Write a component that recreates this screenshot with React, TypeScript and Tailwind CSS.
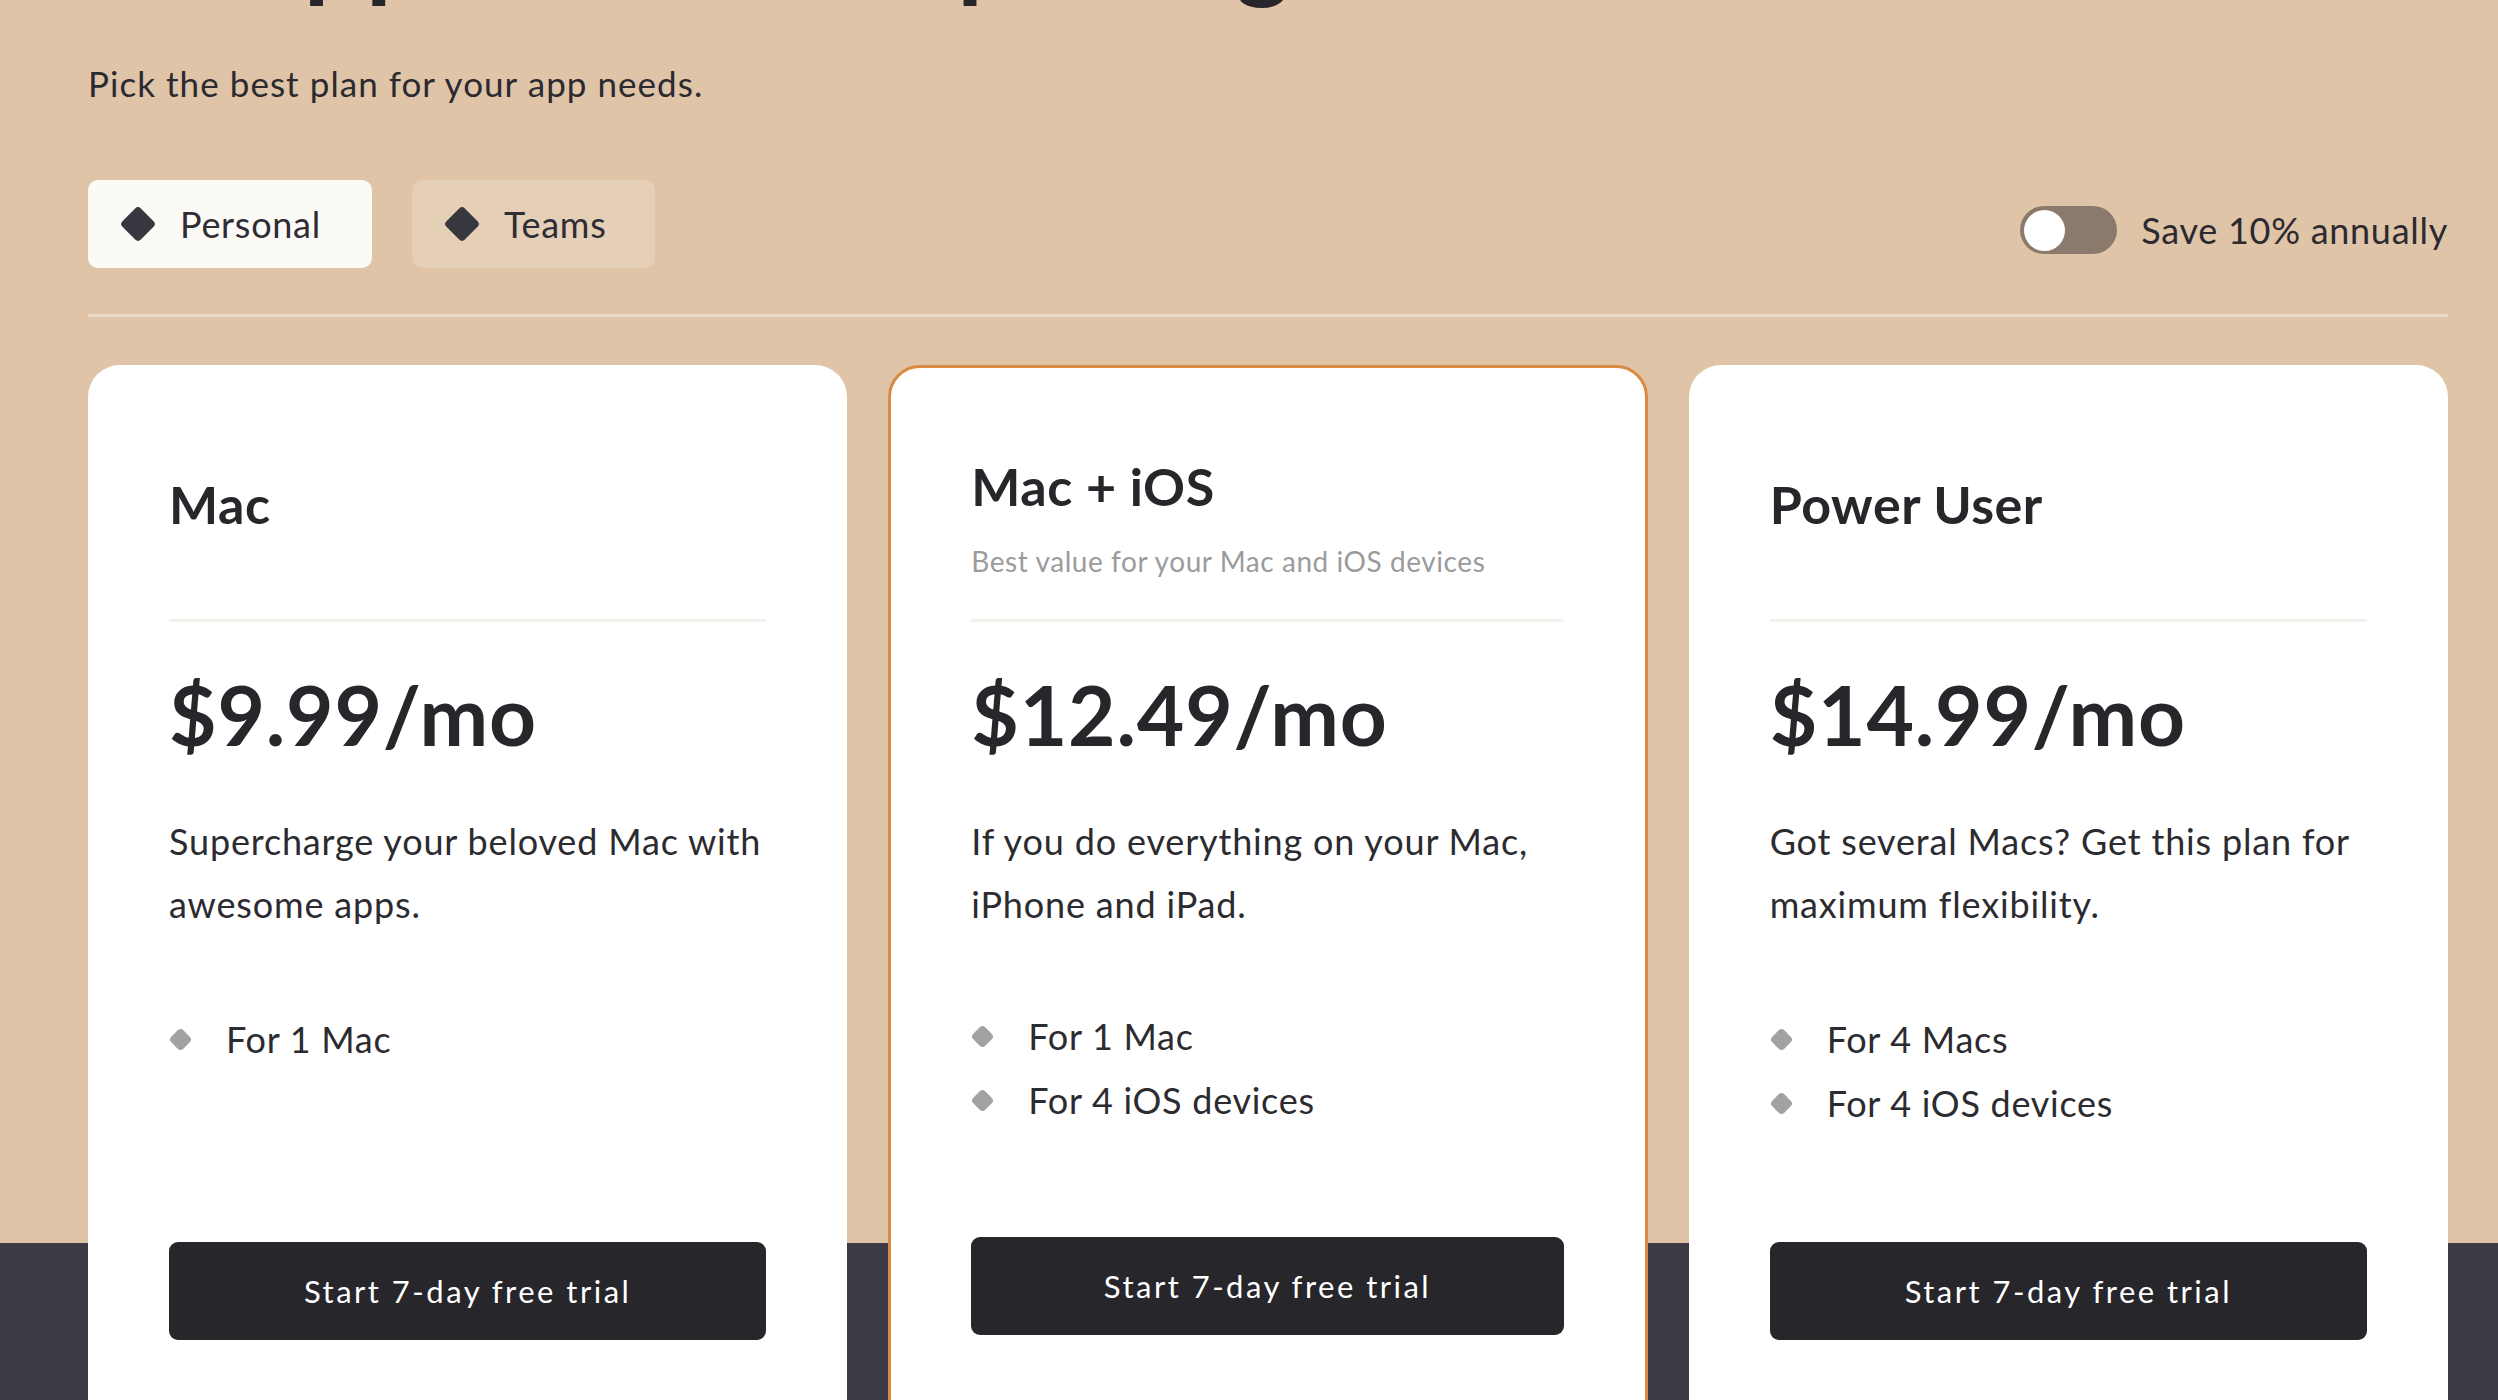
const plans = [
  {
    name: "Mac",
    price: "$9.99/mo",
    desc: ["Supercharge your beloved Mac with", "awesome apps."],
    features: ["For 1 Mac"],
  },
  {
    name: "Mac + iOS",
    note: "Best value for your Mac and iOS devices",
    price: "$12.49/mo",
    desc: ["If you do everything on your Mac,", "iPhone and iPad."],
    features: ["For 1 Mac", "For 4 iOS devices"],
    featured: true,
  },
  {
    name: "Power User",
    price: "$14.99/mo",
    desc: ["Got several Macs? Get this plan for", "maximum flexibility."],
    features: ["For 4 Macs", "For 4 iOS devices"],
  },
];

type Plan = (typeof plans)[number];

const Diamond = ({ className }: { className: string }) => (
  <span className={`block shrink-0 rotate-45 rounded-[4px] ${className}`} />
);

const PlanCard = ({ plan }: { plan: Plan }) => {
  return (
    <div
      className={`flex flex-col rounded-[32px] bg-white pb-24 ${
        plan.featured ? "border-[3px] border-[#d98b41] pl-[80px] pr-[81px]" : "px-[81px] pt-[3px]"
      }`}
    >
      <div
        className={`flex h-[254px] flex-col border-b-[3px] border-[#f4f0eb] ${
          plan.featured ? "pt-[88px]" : "pt-[106px]"
        }`}
      >
        <h2 className="text-[52px] font-bold leading-[60px] tracking-[0.01em] text-[#27272b]">
          {plan.name}
        </h2>
        {plan.note && (
          <p className="mt-[25px] text-[28px] leading-[40px] tracking-[0.02em] text-[#9b9b9d]">
            {plan.note}
          </p>
        )}
      </div>
      <div className="mt-[44px] text-[82px] font-bold leading-[96px] tracking-[0.01em] text-[#27272b]">
        {plan.price}
      </div>
      <p className="mt-[48px] text-[36px] leading-[63px] tracking-[0.023em] text-[#2b2b30]">
        {plan.desc.map((line) => (
          <span key={line} className="block">
            {line}
          </span>
        ))}
      </p>
      <ul
        className={`flex flex-col ${
          plan.featured ? "mt-[68px] h-[233px]" : "mt-[71px] h-[235px]"
        }`}
      >
        {plan.features.map((f) => (
          <li key={f} className="flex h-[64px] items-center gap-[37px]">
            <Diamond className="ml-[3px] h-[17px] w-[17px] bg-[#a2a2a4]" />
            <span className="text-[36px] tracking-[0.02em] text-[#2b2b30]">{f}</span>
          </li>
        ))}
      </ul>
      <button className="h-[98px] rounded-[9px] bg-[#26262b] text-[31px] tracking-[0.08em] text-white">
        Start 7-day free trial
      </button>
    </div>
  );
};

export default function App() {
  return (
    <div className="min-h-[1400px] overflow-hidden bg-[linear-gradient(to_bottom,#dfc4a8_1243px,#3c3b46_1243px)] font-[Lato,sans-serif] text-[#2b2a30]">
      <div className="ml-[88px] w-[2360px]">
        <h1 className="-mt-[103px] whitespace-nowrap text-[104px] font-bold leading-[104px] tracking-[0.03em] text-[#26262b]">
          Setapp all-in-one pricing
        </h1>
        <p className="mt-[58px] text-[35px] leading-[48px] tracking-[0.03em]">
          Pick the best plan for your app needs.
        </p>

        <div className="mt-[73px] flex items-center justify-between">
          <div className="flex gap-[40px]">
            <button className="flex h-[88px] items-center gap-[29px] rounded-[10px] bg-[#fcfaf7] pl-[37px] pr-[51px]">
              <Diamond className="h-[26px] w-[26px] bg-[#38373f]" />
              <span className="text-[36px] tracking-[0.02em] text-[#2e2d33]">Personal</span>
            </button>
            <button className="flex h-[88px] items-center gap-[29px] rounded-[10px] bg-[#e5cfb7] pl-[37px] pr-[49px]">
              <Diamond className="h-[26px] w-[26px] bg-[#38373f]" />
              <span className="text-[36px] tracking-[0.02em] text-[#2e2d33]">Teams</span>
            </button>
          </div>
          <div className="mt-[12px] flex items-center gap-[24px]">
            <div className="flex h-[48px] w-[97px] items-center rounded-full bg-[#8b7a6b] px-[4px]">
              <span className="h-[41px] w-[41px] rounded-full bg-white" />
            </div>
            <span className="text-[36px] tracking-[0.02em] text-[#2b2a30]">
              Save 10% annually
            </span>
          </div>
        </div>

        <div className="mt-[46px] h-[3px] bg-[#ebdbc9]" />

        <div className="mt-[48px] grid grid-cols-3 gap-[41px]">
          {plans.map((p) => (
            <PlanCard key={p.name} plan={p} />
          ))}
        </div>
      </div>
    </div>
  );
}
